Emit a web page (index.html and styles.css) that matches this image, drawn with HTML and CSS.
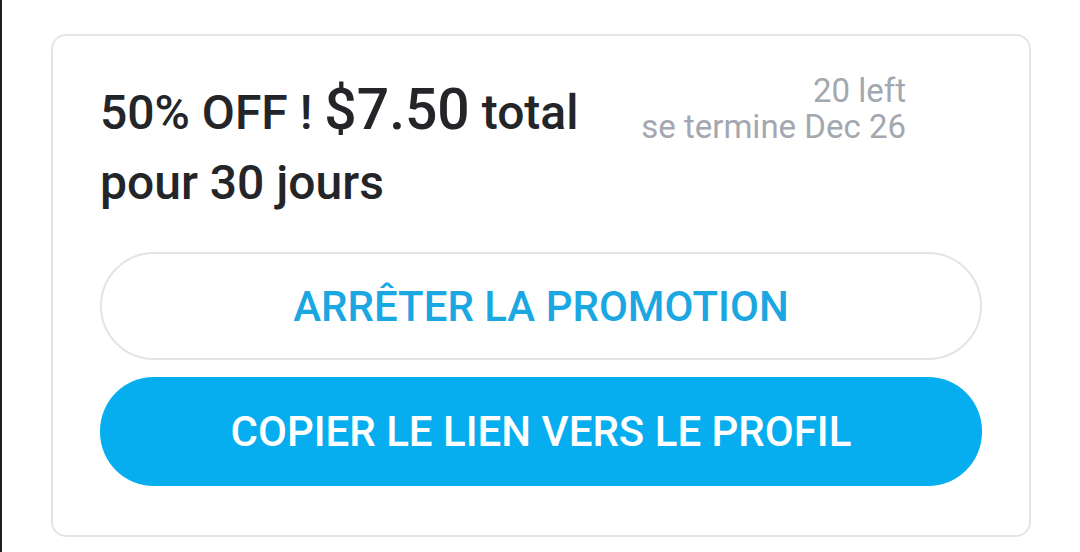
FILE: index.html
```html
<!DOCTYPE html>
<html lang="fr">
<head>
<meta charset="utf-8">
<title>Promotion</title>
<link rel="stylesheet" href="styles.css">
</head>
<body>
<div class="page">
  <section class="card">
    <div class="top">
      <h2 class="title">50% OFF ! <span class="price">$7.50</span> total<br>pour 30 jours</h2>
      <div class="meta">
        <div>20 left</div>
        <div>se termine Dec 26</div>
      </div>
    </div>
    <div class="actions">
      <button class="btn btn-outline" type="button">ARRÊTER LA PROMOTION</button>
      <button class="btn btn-primary" type="button">COPIER LE LIEN VERS LE PROFIL</button>
    </div>
  </section>
</div>
</body>
</html>
```
FILE: styles.css
```css
* { box-sizing: border-box; }
html, body { margin: 0; padding: 0; background: #ffffff; }
body {
  font-family: Roboto, "Liberation Sans", Arial, sans-serif;
  height: 552px;
  overflow: hidden;
}
.page {
  height: 552px;
  border-left: 2px solid #1e1e1e;
  padding: 34px 0 0 49px;
}
.card {
  width: 980px;
  border: 2px solid #e3e5e9;
  border-radius: 15px;
  padding: 42px 47px 49px 47px;
  background: #fff;
}
.top {
  display: flex;
  justify-content: space-between;
  align-items: flex-start;
}
.title {
  margin: 0;
  font-size: 48px;
  font-weight: 500;
  line-height: 70px;
  color: #242529;
}
.price {
  font-size: 57px;
  line-height: 1;
}
.meta {
  margin: -5px 76px 0 0;
  text-align: right;
  font-size: 33px;
  line-height: 36px;
  color: #a3a8b0;
}
.actions {
  display: flex;
  flex-direction: column;
  gap: 17px;
  margin-top: 34px;
}
.btn {
  display: flex;
  align-items: center;
  justify-content: center;
  width: 100%;
  height: 108px;
  border-radius: 54px;
  font-family: inherit;
  font-size: 42px;
  font-weight: 500;
  padding: 0;
  cursor: pointer;
}
.btn-outline {
  background: #fff;
  border: 2px solid #e2e4e8;
  color: #1ba7e1;
}
.btn-primary {
  height: 109px;
  background: #06aeef;
  border: none;
  color: #ffffff;
}
```
